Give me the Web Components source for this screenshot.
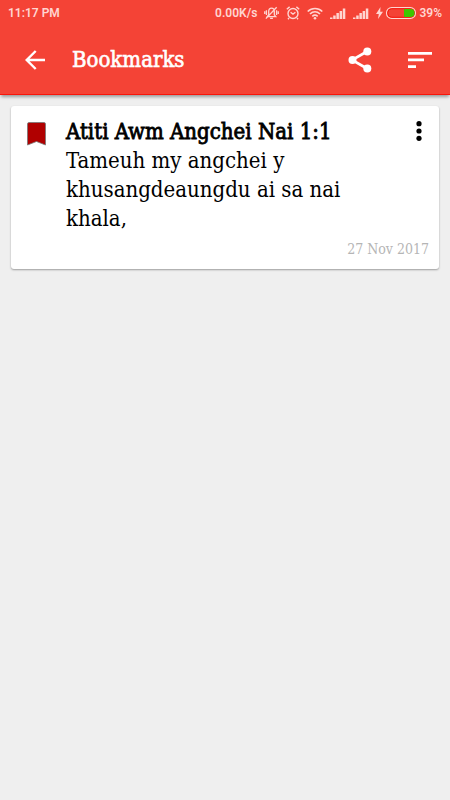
<!DOCTYPE html>
<html lang="en">
<head>
<meta charset="utf-8">
<meta name="viewport" content="width=device-width, initial-scale=1">
<title>Bookmarks</title>
<style>
  body { margin: 0; background: #efefef; color: #000; font-family: "DejaVu Serif Condensed", "DejaVu Serif", serif; min-height: 100vh; }
</style>
</head>
<body>
<bookmarks-page></bookmarks-page>
<script>
const define = (name, html) => {
  const template = document.createElement('template');
  template.innerHTML = html;
  customElements.define(name, class extends HTMLElement {
    constructor() {
      super();
      this.attachShadow({ mode: 'open' }).append(template.content.cloneNode(true));
    }
  });
};

define('status-bar', `
  <style>
    :host { display: flex; align-items: center; justify-content: space-between; height: 26px; padding: 0 8px; background: #f44336; color: #ffd5d1; font: 600 12px/16px Roboto, sans-serif; }
    .right { display: flex; align-items: center; gap: 7px; }
    .power { display: flex; align-items: center; gap: 3px; }
    svg { display: block; }
  </style>
  <span>11:17 PM</span>
  <div class="right">
    <span>0.00K/s</span>
    <svg width="15" height="14" viewBox="0 0 16 14" fill="none" stroke="#ffd5d1" stroke-width="1.400" aria-hidden="true">
      <path d="M3.500 10.800 5 9V5c0-2 1.200-3.200 3-3.200S11 3 11 5v4l1.500 1.800zM6.500 12.700h3M2.600 4v5M.8 5v3M13.400 4v5M15.200 5v3M13.500.8 2 13"/>
    </svg>
    <svg width="14" height="14" viewBox="0 0 14 14" fill="none" stroke="#ffd5d1" stroke-width="1.400" aria-hidden="true">
      <circle cx="7" cy="7.500" r="5"/><path d="M.8 3.200 3.600.9M13.200 3.200 10.400.9M4.600 6.200 7 8.200l2.400-2M3 12l-1 1.300M11 12l1 1.300"/>
    </svg>
    <svg width="16" height="13" viewBox="0 0 16 13" fill="none" stroke="#ffd5d1" stroke-width="1.700" aria-hidden="true">
      <path d="M.7 4.500c4.200-4 10.400-4 14.600 0M3 7c3-2.800 7-2.800 10 0M5.300 9.400c1.700-1.500 3.700-1.500 5.400 0"/><circle cx="8" cy="11.300" r="1.300" fill="#ffd5d1" stroke="none"/>
    </svg>
    <svg width="16" height="11" viewBox="0 0 16 11" fill="#ffd5d1" aria-hidden="true"><path d="M0 9.500h2.500V11H0zM3.200 7.500h2.500V11H3.200zM6.400 5h2.500v6H6.400zM9.600 3h2.500v8H9.600zM12.800 .5h2.500V11h-2.500z"/></svg>
    <svg width="16" height="11" viewBox="0 0 16 11" fill="#ffd5d1" aria-hidden="true"><path d="M0 9.500h2.500V11H0zM3.200 7.500h2.500V11H3.200zM6.400 5h2.500v6H6.400zM9.600 3h2.500v8H9.600zM12.800 .5h2.500V11h-2.500z"/></svg>
    <div class="power">
      <svg width="7" height="12" viewBox="0 0 7 12" fill="#ffd5d1" aria-hidden="true"><path d="M4.500 0 0 7h2.800L2 12l5-7.200H4.200z"/></svg>
      <svg width="30" height="12" viewBox="0 0 30 12" aria-hidden="true"><rect x=".6" y=".6" width="28.800" height="10.800" rx="5" fill="#f44336" stroke="#ffd5d1" stroke-width="1.200"/><rect x="1.700" y="1.700" width="26.600" height="8.600" rx="4" fill="none" stroke="#f5150a" stroke-width="1"/><path d="M18 2h6.500a4 4 0 0 1 0 8H18z" fill="#3dc700"/></svg>
      <span>39%</span>
    </div>
  </div>
`);

define('app-bar', `
  <style>
    :host { display: flex; align-items: center; height: 68px; padding: 0 6px 0 11px; background: #f44336; color: #fff; border-bottom: 1px solid #f9150a; box-shadow: 0 3px 3px -1px rgba(0,0,0,.35); }
    h1 { flex: 1; margin: 0 0 0 13px; font: inherit; font-size: 22px; line-height: 28px; -webkit-text-stroke: 0.6px currentColor; }
    button { display: grid; place-items: center; width: 48px; height: 48px; padding: 0; border: 0; background: none; color: inherit; }
    .actions { display: flex; gap: 12px; }
    svg { display: block; }
  </style>
  <button aria-label="Back"><svg width="20" height="20" viewBox="0 0 20 20" fill="none" stroke="currentColor" stroke-width="2.400"><path d="M20 10H2M10.700 1 1.700 10l9 9"/></svg></button>
  <h1>Bookmarks</h1>
  <div class="actions">
    <button aria-label="Share"><svg width="24" height="26" viewBox="0 0 24 26" fill="currentColor"><path d="M19 4.500 4 13l15 8.500" fill="none" stroke="currentColor" stroke-width="2.600"/><circle cx="19.300" cy="4.500" r="4"/><circle cx="4.500" cy="13" r="4"/><circle cx="19.300" cy="21.500" r="4"/></svg></button>
    <button aria-label="Sort"><svg width="24" height="16" viewBox="0 0 24 16" fill="currentColor"><path d="M0 0h24v2.700H0zM0 6.600h16v2.700H0zM0 13.200h8v2.700H0z"/></svg></button>
  </div>
`);

define('bookmark-card', `
  <style>
    :host { display: block; background: #fff; border-radius: 3px; box-shadow: 0 1px 2px rgba(0,0,0,.35); padding: 11px 10px 10px 16px; }
    .row { display: flex; align-items: flex-start; }
    .mark { display: block; margin: 5px 20px 0 0; }
    .text { flex: 1; min-width: 0; padding-right: 20px; font-size: 22px; line-height: 29px; }
    h2 { margin: 0; font: inherit; -webkit-text-stroke: 0.8px currentColor; }
    p { margin: 0; }
    button { display: grid; place-items: center; width: 20px; height: 28px; padding: 0; border: 0; background: none; color: #000; }
    footer { margin-top: 6px; text-align: right; font-size: 14px; line-height: 20px; color: #b5b5b5; }
  </style>
  <article>
    <div class="row">
      <svg class="mark" width="19" height="24" viewBox="0 0 19 24" aria-hidden="true"><path d="M.5 2Q.5.500 2 .500h15q1.500 0 1.500 1.500v21L9.500 19.500l-9 3.500z" fill="#b00000" stroke="#777" stroke-width=".8"/></svg>
      <div class="text"><h2><slot name="title"></slot></h2><p><slot></slot></p></div>
      <button aria-label="More options"><svg width="6" height="20" viewBox="0 0 6 20" fill="currentColor"><circle cx="3" cy="2.700" r="2.600"/><circle cx="3" cy="10" r="2.600"/><circle cx="3" cy="17.300" r="2.600"/></svg></button>
    </div>
    <footer><slot name="date"></slot></footer>
  </article>
`);

define('bookmarks-page', `
  <style>
    :host { display: block; }
    main { padding: 11px; }
  </style>
  <status-bar></status-bar>
  <app-bar></app-bar>
  <main>
    <bookmark-card>
      <span slot="title">Atiti Awm Angchei Nai 1:1</span>
      Tameuh my angchei y khusangdeaungdu ai sa nai khala,
      <time slot="date" datetime="2017-11-27">27 Nov 2017</time>
    </bookmark-card>
  </main>
`);
</script>
</body>
</html>
